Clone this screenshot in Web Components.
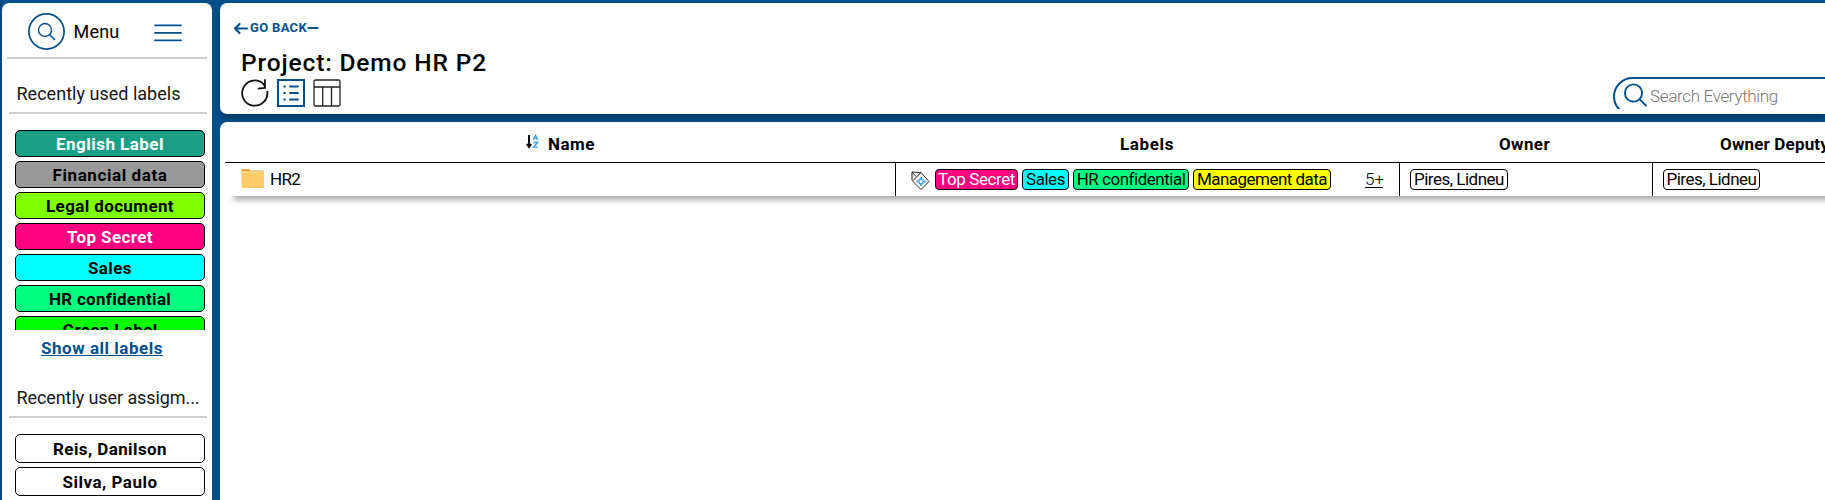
<!DOCTYPE html>
<html lang="en"><head><meta charset="utf-8"><title>Project: Demo HR P2</title>
<style>
html,body{margin:0;height:500px;overflow:hidden}
body{font-family:Roboto,"Liberation Sans",sans-serif;color:#000}
</style></head><body>
<hr-app></hr-app>
<script>
function define(name, html, ready){
  customElements.define(name, class extends HTMLElement{
    constructor(){super();this.attachShadow({mode:'open'}).innerHTML=html;}
    connectedCallback(){if(ready)ready(this);}
  });
}
// Single-line text whose tracking is adjusted to the width given in "w".
define('fit-text','<style>:host{display:inline-block;white-space:nowrap}span{display:inline-block}</style><span><slot></slot></span>',el=>{
  const w=+el.getAttribute('w'), s=el.shadowRoot.querySelector('span');
  const n=el.textContent.length, nat=s.getBoundingClientRect().width;
  if(w&&nat) s.style.letterSpacing=((w-nat)/n).toFixed(3)+'px';
});
define('label-button',`<style>:host{display:flex;box-sizing:border-box;height:27px;border:1px solid #000;border-radius:5px;background:var(--c,#fff);color:var(--t,#000);font-size:17px;font-weight:700;line-height:26px;justify-content:center;flex:none}</style><slot></slot>`);
define('label-chip',`<style>:host{display:inline-flex;box-sizing:border-box;height:21px;border:1px solid #000;border-radius:4px;background:var(--c,#fff);color:var(--t,#000);font-size:17px;line-height:18px;justify-content:center;flex:none}</style><slot></slot>`);
define('section-title',`<style>:host{display:block;flex:none;box-sizing:border-box;height:32px;margin:0 5px 0 7px;padding-left:7.5px;border-bottom:2px solid #cfcfcf;font-size:18px;line-height:24px;color:#161616}</style><slot></slot>`);
define('side-bar',`<style>
:host{display:flex;flex-direction:column;background:#fff;border-radius:7px 7px 0 0;height:497px;overflow:hidden}
header{display:flex;flex:none;align-items:flex-start;box-sizing:border-box;height:56px;margin:0 5px;border-bottom:2px solid #cfcfcf;padding:10px 0 0 21px;font-size:18px}
header fit-text{margin:8px 0 0 8.5px;line-height:22px}
.burger{margin:10px 0 0 33.5px}
section-title.a{margin-top:23px}section-title.b{margin-top:21px}
.list{display:flex;flex:none;flex-direction:column;gap:4px;margin:16px 7px 0 13px}
.labels{height:200px;overflow:hidden}
.users{margin-top:16px}
.users label-button{height:29px;line-height:28px}
a{display:block;flex:none;text-align:left;margin-left:39px;height:29px;line-height:24px;margin-top:6px;font-size:17px;font-weight:700;color:#04508c}
a span{border-bottom:1px solid #04508c;display:inline-block;height:19px}
</style>
<header><svg width="37" height="37" viewBox="0 0 37 37" fill="none" stroke="#04508c"><circle cx="18.5" cy="18.5" r="17.6" stroke-width="1.7"/><circle cx="17" cy="17" r="6.5" stroke-width="1.4"/><path d="M21.7 21.7L27 27" stroke-width="1.6"/></svg>
<fit-text w="46">Menu</fit-text>
<svg class="burger" width="30" height="20" viewBox="0 0 30 20" stroke="#04508c" stroke-width="1.8" stroke-linecap="round"><path d="M2 2.3H28M2 9.8H28M2 17.3H28"/></svg></header>
<section-title class="a"><fit-text w="164">Recently used labels</fit-text></section-title>
<div class="list labels">
<label-button style="--c:#1a9f86;--t:#fff"><fit-text w="108">English Label</fit-text></label-button>
<label-button style="--c:#999"><fit-text w="115">Financial data</fit-text></label-button>
<label-button style="--c:#80ff00"><fit-text w="128">Legal document</fit-text></label-button>
<label-button style="--c:#ff0080;--t:#fff"><fit-text w="86">Top Secret</fit-text></label-button>
<label-button style="--c:#0ff"><fit-text w="44">Sales</fit-text></label-button>
<label-button style="--c:#00ff80"><fit-text w="122">HR confidential</fit-text></label-button>
<label-button style="--c:#0f0"><fit-text w="95">Green Label</fit-text></label-button>
</div>
<a><span><fit-text w="122">Show all labels</fit-text></span></a>
<section-title class="b"><fit-text w="183">Recently user assigm...</fit-text></section-title>
<div class="list users">
<label-button><fit-text w="114">Reis, Danilson</fit-text></label-button>
<label-button><fit-text w="95">Silva, Paulo</fit-text></label-button></div>`);
define('search-box',`<style>:host{display:block;position:absolute;right:0;top:74px;width:212px;height:32px;overflow:hidden}
div{box-sizing:border-box;width:300px;height:39px;border:2px solid #04508c;border-radius:20px;display:flex;padding:4px 0 0 8px;color:#777;font-size:17px;font-weight:300;line-height:26px}fit-text{margin:0 0 0 2px}</style>
<div><svg width="25" height="25" viewBox="0 0 25 25" fill="none" stroke="#04508c" stroke-width="1.9"><circle cx="10.5" cy="10" r="8.6"/><path d="M16.8 16.3L23.5 23"/></svg><fit-text w="128">Search Everything</fit-text></div>`);
define('page-head',`<style>:host{display:block;position:relative;box-sizing:border-box;height:111px;background:#fff;border-radius:7px 0 0 7px;padding:17px 0 0 13px;box-shadow:0 4px 6px rgba(0,0,0,.3)}
.back{display:flex;height:20px;color:#04508c;font-size:13px;font-weight:700;line-height:17px}
.back fit-text{margin:-1px 0 0 1px}
h1{font-size:24.5px;font-weight:500;margin:7px 0 0 8px;line-height:32px;height:32px}
nav{display:flex;gap:8px;padding-left:8px}</style>
<div class="back"><svg width="16" height="20" viewBox="0 0 16 20" fill="none" stroke="#04508c" stroke-width="2.2" stroke-linecap="round" stroke-linejoin="round"><path d="M14 8.5H2M6.5 4L2 8.5L6.5 13"/></svg><fit-text w="57">GO BACK</fit-text><svg width="12" height="20"><path d="M1.5 8H10.5" stroke="#04508c" stroke-width="2.2" stroke-linecap="round"/></svg></div>
<h1><fit-text w="246">Project: Demo HR P2</fit-text></h1>
<nav>
<svg width="28" height="28" viewBox="0 0 28 28" fill="none" stroke="#111" stroke-width="1.8"><path d="M26.2 12A12.6 12.6 0 1 1 22.8 5.3L24.2 8.4M24 .3V8.9L16.8 9.6"/></svg>
<svg width="28" height="28" viewBox="0 0 28 28" fill="none" stroke="#04508c"><rect x="1" y="1" width="26" height="26" stroke-width="2"/><path d="M13 7.5H21M13 14H21M13 20.5H21" stroke-width="2" stroke-linecap="round"/><path d="M6.5 7.5H8.7M6.5 14H8.7M6.5 20.5H8.7" stroke-width="2"/></svg>
<svg width="28" height="28" viewBox="0 0 28 28" fill="none" stroke="#222" stroke-width="1.3"><rect x="1" y="1" width="26" height="26" rx="1.5"/><path d="M1 8H27M9.7 8V27M18.5 8V27"/></svg>
</nav><search-box></search-box>`);
define('data-table',`<style>:host{display:block;background:#fff;border-radius:7px 0 0 0;height:378px;padding-left:5px;overflow:hidden}
.h,.r{display:grid;grid-template-columns:670px 504px 253px 253px}
.h{height:40px;border-bottom:1px solid #000;font-size:17px;font-weight:700;line-height:45px}
.h>div,.r>div{display:flex;box-sizing:border-box}
.r{height:33px;font-size:17px;box-shadow:7px 6px 6px -2px rgba(0,0,0,.34);line-height:32px}
.r>div+div{border-left:1px solid #000}
.r label-chip{margin-top:6px}
.cnt{margin:6px 0 0 34px;line-height:20px;border-bottom:1px solid #000;height:18px;width:18px;font-weight:300}</style>
<div class="h"><div style="padding-left:301px"><svg width="13" height="16" viewBox="0 0 13 16" style="margin:12px 9px 0 0"><path d="M3 1V12M.8 10L3 13L5.2 10" stroke="#111" stroke-width="2" fill="none"/><path d="M7.2 6L9.5 1.2L11.8 6M8 4.3H11M7.3 8.5H11.7L7.3 13.2H12" stroke="#3ba0ee" stroke-width="1.3" fill="none"/></svg><fit-text w="47">Name</fit-text></div>
<div style="padding-left:225px"><fit-text w="54">Labels</fit-text></div><div style="padding-left:100px"><fit-text w="51">Owner</fit-text></div><div style="padding-left:68px"><fit-text w="109">Owner Deputy</fit-text></div></div>
<div class="r"><div style="padding-left:16px"><svg width="23" height="19" viewBox="0 0 23 19" style="margin:6px 6px 0 0"><path d="M.5 1Q.5 0 1.5 0H8L9.5 1.5H22.5V5H.5Z" fill="#e4a33e"/><path d="M.5 3H23V19H.5Z" fill="#ffcb67"/><path d="M1 3H22" stroke="#ffe9bd"/></svg><fit-text w="30">HR2</fit-text></div>
<div style="padding-left:15px"><svg width="19" height="20" viewBox="0 0 19 20" fill="none" stroke="#222" stroke-width="1" style="margin:8px 5px 0 0"><path d="M10 1.5L18 10.5L10 18.5L1.5 10L10 1.5Z"/><path d="M10 1.5L1 1V9.5M1 1L5 5.5"/><path d="M10 6V9M10 12V15M5.5 10.5H8.5M11.5 10.5H14.5M8 8L9 9.5M12 8L11 9.5M8 13L9 11.5M12 13L11 11.5" stroke="#4aa3e8" stroke-width="1.9"/></svg>
<label-chip style="width:83px;margin-right:4px;--c:#ff0080;--t:#fff"><fit-text w="77">Top Secret</fit-text></label-chip><label-chip style="width:47px;margin-right:4px;--c:#0ff"><fit-text w="39">Sales</fit-text></label-chip><label-chip style="width:116px;margin-right:4px;--c:#00ff80"><fit-text w="108">HR confidential</fit-text></label-chip><label-chip style="width:138px;--c:#ff0"><fit-text w="130">Management data</fit-text></label-chip><span class="cnt"><fit-text w="19">5+</fit-text></span></div>
<div style="padding-left:10px"><label-chip style="width:98px"><fit-text w="90">Pires, Lidneu</fit-text></label-chip></div>
<div style="padding-left:10px"><label-chip style="width:97px"><fit-text w="90">Pires, Lidneu</fit-text></label-chip></div></div>`);
define('hr-app',`<style>:host{display:grid;grid-template-columns:210px 1605px;column-gap:8px;box-sizing:border-box;width:1825px;height:500px;padding:3px 0 0 2px;background:linear-gradient(90deg,#04427a,#04508c 3px);overflow:hidden}main{display:flex;flex-direction:column;gap:8px;width:1605px}</style><side-bar></side-bar><main><page-head></page-head><data-table></data-table></main>`);
</script></body></html>
